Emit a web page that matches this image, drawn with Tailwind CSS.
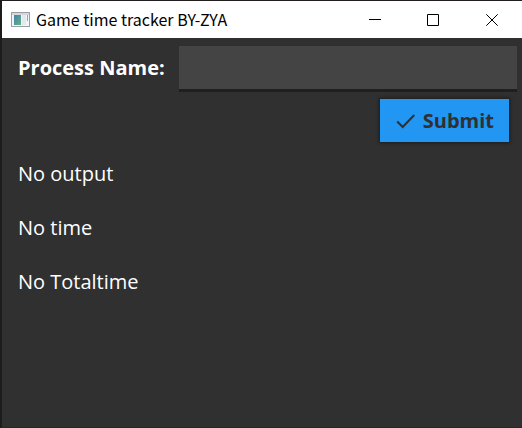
<!DOCTYPE html>
<html lang="en">
<head>
<meta charset="utf-8">
<meta name="viewport" content="width=device-width, initial-scale=1">
<title>Game time tracker BY-ZYA</title>
<script src="https://cdn.jsdelivr.net/npm/@tailwindcss/browser@4"></script>
</head>
<body class="flex min-h-screen flex-col border-t border-b border-l-2 border-t-[#231f20] border-b-[#292529] border-l-[#1c1c1c] bg-[#303030] font-['Open_Sans',sans-serif] text-xl text-white">
  <header class="flex h-[37px] items-center bg-white text-black">
    <svg class="ml-[9px] h-4 w-5 shrink-0" viewBox="0 0 20 16" aria-hidden="true">
      <defs>
        <linearGradient id="pane" x1="0" y1="0" x2="1" y2="1">
          <stop offset="0" stop-color="#4b7fae"/>
          <stop offset="1" stop-color="#5fb483"/>
        </linearGradient>
      </defs>
      <rect x=".5" y=".5" width="18" height="14" fill="#f3f4f6" stroke="#9b9fa5"/>
      <rect x="1" y="1" width="17" height="2" fill="#d3d7dc"/>
      <rect x="3" y="3" width="7" height="10" fill="url(#pane)"/>
      <rect x="11" y="3" width="4" height="10" fill="#e3e8ee"/>
      <rect x="16" y="3" width="1" height="6" fill="#78b5a8"/>
    </svg>
    <h1 class="ml-[5px] grow truncate pb-0.5 font-['Noto_Sans_CJK_SC',sans-serif] text-base">Game time tracker BY-ZYA</h1>
    <div class="flex h-full">
      <button type="button" aria-label="Minimize" class="flex w-[58px] items-center justify-center">
        <svg class="size-3" viewBox="0 0 12 12" aria-hidden="true"><path d="M0 5.5h12" stroke="#000"/></svg>
      </button>
      <button type="button" aria-label="Maximize" class="flex w-[58px] items-center justify-center">
        <svg class="size-3" viewBox="0 0 12 12" aria-hidden="true"><path d="M.5 .5h11v11H.5z" fill="none" stroke="#000"/></svg>
      </button>
      <button type="button" aria-label="Close" class="flex w-[60px] items-center justify-center">
        <svg class="size-3" viewBox="0 0 12 12" aria-hidden="true"><path d="M.3 .3l11.4 11.4M11.7 .3L.3 11.7" stroke="#000"/></svg>
      </button>
    </div>
  </header>
  <main class="grow">
    <form class="pt-2">
      <div class="flex items-center pr-[5px] pl-4">
        <label for="process" class="mr-3.5 pb-0.5 font-bold">Process Name:</label>
        <input id="process" type="text" class="h-[46px] min-w-0 grow border-b-3 border-[#1f1f1f] bg-[#444444] px-3 outline-none">
      </div>
      <div class="mt-[7px] flex justify-end pr-[13px]">
        <button type="submit" class="flex h-[43px] items-center gap-2 bg-[#2196f3] px-[15px] font-bold text-[#303030] shadow-[0_0_3px_1px_#1c1c1c]">
          <svg class="h-5 w-5" viewBox="0 0 20 20" fill="none" stroke="#303030" stroke-width="2" aria-hidden="true"><path d="M2.2 10.500L7.700 16L19.300 4"/></svg>
          Submit
        </button>
      </div>
    </form>
    <div class="mt-[18px] space-y-[26px] px-4">
      <p>No output</p>
      <p>No time</p>
      <p>No Totaltime</p>
    </div>
  </main>
</body>
</html>
